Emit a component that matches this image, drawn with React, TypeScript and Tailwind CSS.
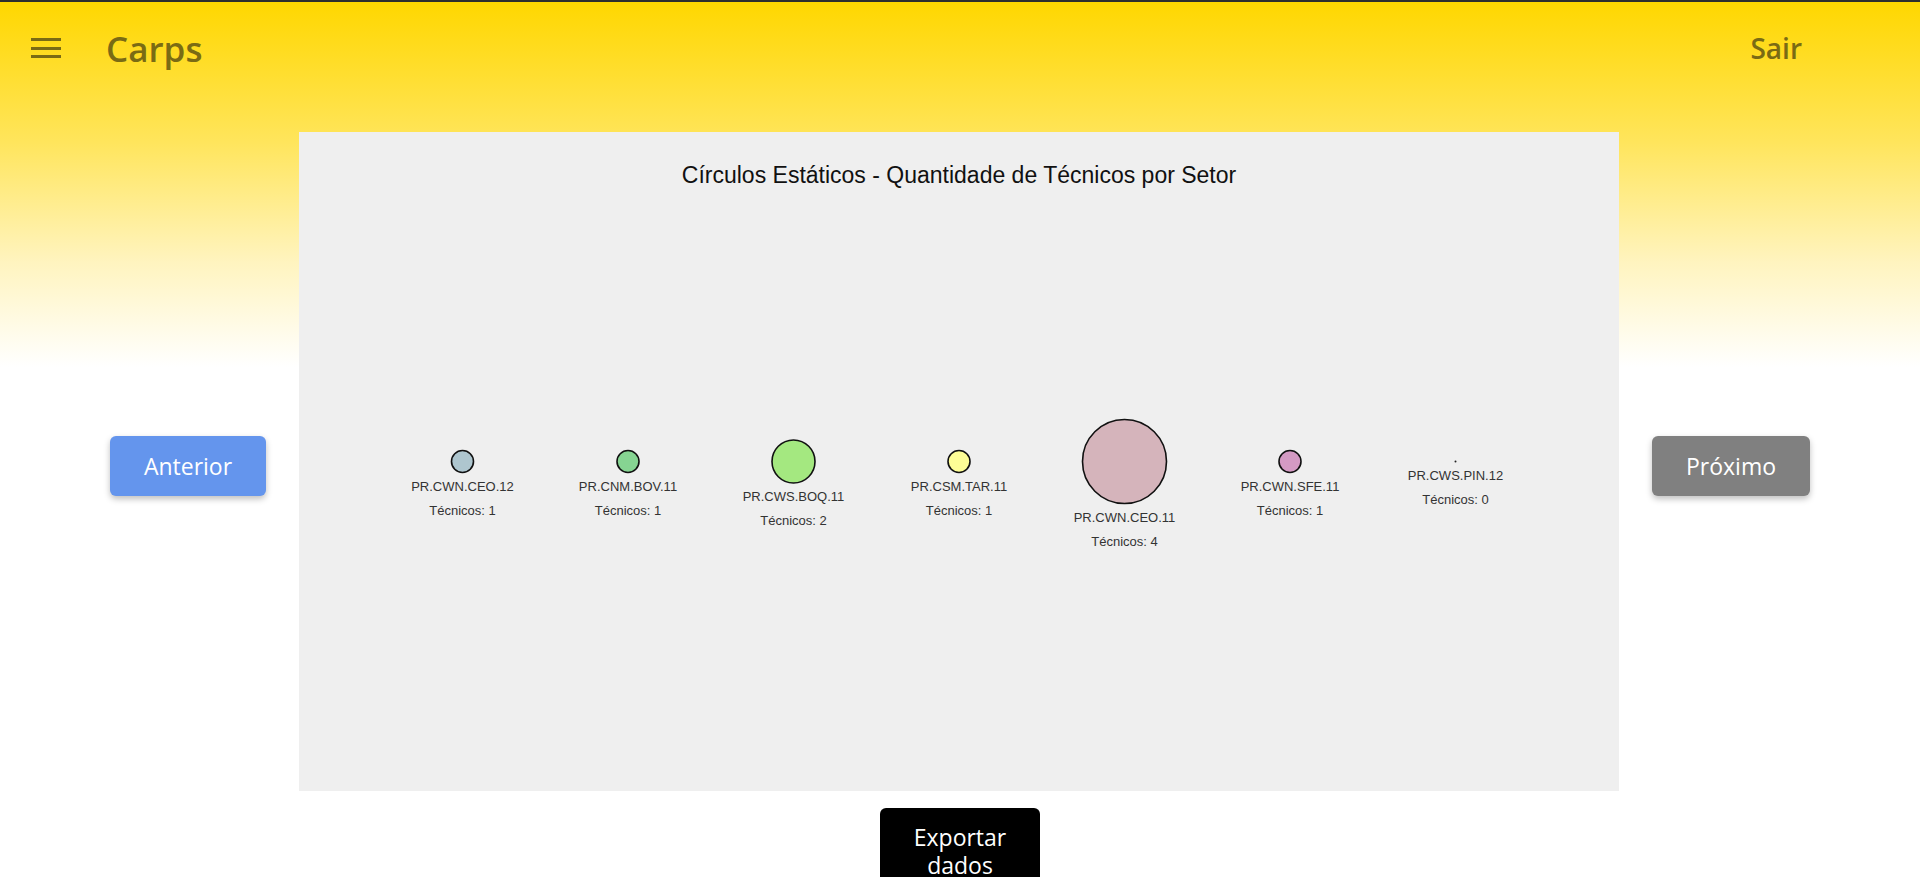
import React from 'react';

// setores exibidos no gráfico de círculos
interface Setor {
  nome: string;
  tecnicos: number;
  raio: number;
  cor: string;
}

const setores: Setor[] = [
  { nome: 'PR.CWN.CEO.12', tecnicos: 1, raio: 11, cor: '#aec6cf' },
  { nome: 'PR.CNM.BOV.11', tecnicos: 1, raio: 11, cor: '#86d492' },
  { nome: 'PR.CWS.BOQ.11', tecnicos: 2, raio: 21.5, cor: '#a4e880' },
  { nome: 'PR.CSM.TAR.11', tecnicos: 1, raio: 11, cor: '#fdfd96' },
  { nome: 'PR.CWN.CEO.11', tecnicos: 4, raio: 42, cor: '#d5b4bb' },
  { nome: 'PR.CWN.SFE.11', tecnicos: 1, raio: 11, cor: '#d49ac3' },
  { nome: 'PR.CWS.PIN.12', tecnicos: 0, raio: 0, cor: '#000000' },
];

const LARGURA = 1320;
const ALTURA = 659;
const ESPACO = 165.5;

const GraficoCirculos: React.FC = () => {
  const cy = ALTURA / 2;
  const inicio = LARGURA / 2 - ESPACO * ((setores.length - 1) / 2);

  return (
    <svg width={LARGURA} height={ALTURA} className="block" style={{ fontFamily: '"Liberation Sans", Arial, sans-serif' }}>
      <text x={LARGURA / 2} y={51} textAnchor="middle" fontSize={23} fill="#111">
        Círculos Estáticos - Quantidade de Técnicos por Setor
      </text>
      {setores.map((s, i) => {
        const cx = inicio + i * ESPACO;
        const base = cy + s.raio + 18;
        return (
          <g key={s.nome}>
            {s.raio > 0 ? (
              <circle cx={cx} cy={cy} r={s.raio} fill={s.cor} stroke="#111" strokeWidth={1.6} />
            ) : (
              <circle cx={cx} cy={cy} r={1} fill="#222" />
            )}
            <text x={cx} y={base} textAnchor="middle" fontSize={13} fill="#333">
              {s.nome}
            </text>
            <text x={cx} y={base + 24} textAnchor="middle" fontSize={13} fill="#333">
              Técnicos: {s.tecnicos}
            </text>
          </g>
        );
      })}
    </svg>
  );
};

export default function App() {
  return (
    <div className="min-h-screen border-t-2 border-[#2e2e2e] bg-[linear-gradient(to_bottom,#ffd700_0px,#ffe55c_140px,#fff4bf_260px,#ffffff_365px)] font-['Open_Sans',sans-serif]">
      <header className="flex h-[92px] items-center justify-between pl-[31px] pr-[118px]">
        <div className="flex items-center">
          <button className="flex h-[20px] w-[30px] flex-col justify-between" aria-label="menu">
            <span className="h-[3px] w-full bg-[#7a6b14]" />
            <span className="h-[3px] w-full bg-[#7a6b14]" />
            <span className="h-[3px] w-full bg-[#7a6b14]" />
          </button>
          <span className="ml-[45px] text-[35px] font-semibold leading-none text-[#7a6b14]">Carps</span>
        </div>
        <button className="text-[28px] font-semibold text-[#7a6b14]">Sair</button>
      </header>

      <div className="mt-[38px] flex items-center justify-center gap-[33px]">
        <button className="mt-[9px] h-[60px] w-[156px] rounded-md bg-[#6495ed] text-[23px] text-white shadow-[0_3px_6px_rgba(0,0,0,0.25)]">
          Anterior
        </button>
        <div className="bg-[#efefef]">
          <GraficoCirculos />
        </div>
        <button className="mt-[9px] h-[60px] w-[158px] rounded-md bg-[#808080] text-[23px] text-white shadow-[0_3px_6px_rgba(0,0,0,0.25)]">
          Próximo
        </button>
      </div>

      <div className="mt-[17px] flex justify-center">
        <button className="w-[160px] rounded-t-md bg-black px-[20px] pt-[15px] pb-[16px] text-[23px] leading-[28px] text-white">
          <span className="block">Exportar</span>
          <span className="block">dados</span>
        </button>
      </div>
    </div>
  );
}
